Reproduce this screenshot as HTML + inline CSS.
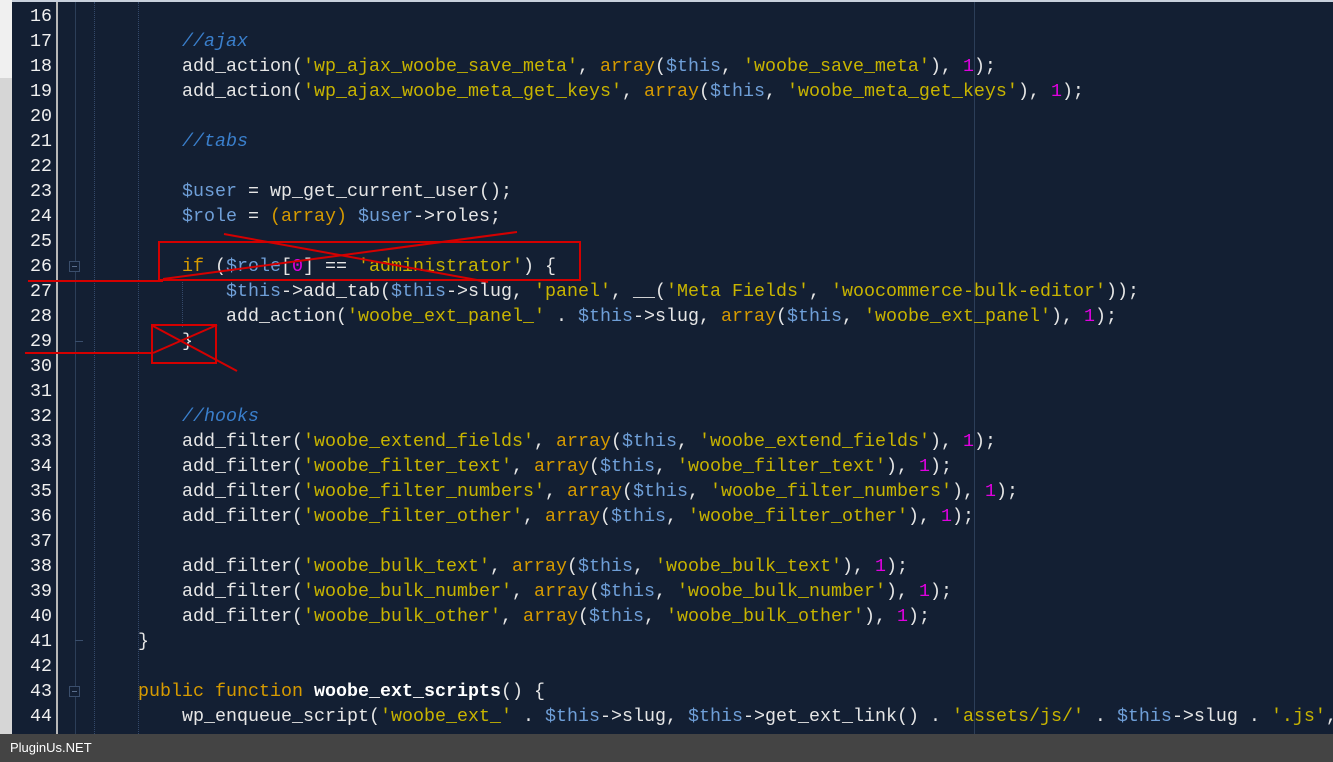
<!DOCTYPE html>
<html><head><meta charset="utf-8"><style>
html,body{margin:0;padding:0;width:1333px;height:762px;overflow:hidden;background:#131f33;}
#ls{position:absolute;left:0;top:0;width:12px;height:734px;background:#d6d6d6;}
#ls2{position:absolute;left:0;top:0;width:12px;height:78px;background:#f0f0f0;}
#top{position:absolute;left:12px;top:0;width:1321px;height:2px;background:#c8d0dc;}
#gb{position:absolute;left:56px;top:2px;width:2px;height:732px;background:#b8b8b8;}
#fl{position:absolute;left:75px;top:2px;width:1px;height:732px;background:#2c3e58;}
.dg{position:absolute;top:2px;height:732px;border-left:1px dotted #34496a;}
#edge{position:absolute;left:974px;top:2px;width:1px;height:732px;background:#2c3e58;}
.ln{position:absolute;left:0;width:52px;text-align:right;color:#f0f0f0;font:18.33px/25px "Liberation Mono",monospace;}
.cl{position:absolute;left:138px;white-space:pre;color:#e6e6e6;font:18.33px/25px "Liberation Mono",monospace;}
.s{color:#c8b400}.k{color:#d69a00}.v{color:#6f9fd8}.c{color:#3a7fcc;font-style:italic}.n{color:#e000e0}.b{font-weight:bold;color:#fff}
.fb{position:absolute;left:69px;width:11px;height:11px;border:1px solid #3a4e6c;box-sizing:border-box;background:#131f33}
.fb:after{content:"";position:absolute;left:2px;top:4px;width:5px;height:1px;background:#5a6e8c}
.tk{position:absolute;left:75px;width:8px;height:1px;background:#3a4e6c}
#bar{position:absolute;left:0;top:734px;width:1333px;height:28px;background:#444;color:#fff;font:13px/28px "Liberation Sans",sans-serif;padding-left:10px;box-sizing:border-box;}
</style></head><body>
<div id="ls"></div><div id="ls2"></div><div id="top"></div>
<div id="gb"></div><div id="fl"></div>
<div class="dg" style="left:94px"></div><div class="dg" style="left:138px"></div>
<div id="edge"></div>
<div class="dg" style="left:182px;top:282px;height:45px"></div>

<div class="ln" style="top:4px">16</div>
<div class="ln" style="top:29px">17</div>
<div class="ln" style="top:54px">18</div>
<div class="ln" style="top:79px">19</div>
<div class="ln" style="top:104px">20</div>
<div class="ln" style="top:129px">21</div>
<div class="ln" style="top:154px">22</div>
<div class="ln" style="top:179px">23</div>
<div class="ln" style="top:204px">24</div>
<div class="ln" style="top:229px">25</div>
<div class="ln" style="top:254px">26</div>
<div class="ln" style="top:279px">27</div>
<div class="ln" style="top:304px">28</div>
<div class="ln" style="top:329px">29</div>
<div class="ln" style="top:354px">30</div>
<div class="ln" style="top:379px">31</div>
<div class="ln" style="top:404px">32</div>
<div class="ln" style="top:429px">33</div>
<div class="ln" style="top:454px">34</div>
<div class="ln" style="top:479px">35</div>
<div class="ln" style="top:504px">36</div>
<div class="ln" style="top:529px">37</div>
<div class="ln" style="top:554px">38</div>
<div class="ln" style="top:579px">39</div>
<div class="ln" style="top:604px">40</div>
<div class="ln" style="top:629px">41</div>
<div class="ln" style="top:654px">42</div>
<div class="ln" style="top:679px">43</div>
<div class="ln" style="top:704px">44</div>

<div class="fb" style="top:261px"></div>
<div class="fb" style="top:686px"></div>
<div class="tk" style="top:341px"></div>
<div class="tk" style="top:640px"></div>

<div class="cl" style="top:29px">    <span class="c">//ajax</span></div>
<div class="cl" style="top:54px">    add_action(<span class="s">'wp_ajax_woobe_save_meta'</span>, <span class="k">array</span>(<span class="v">$this</span>, <span class="s">'woobe_save_meta'</span>), <span class="n">1</span>);</div>
<div class="cl" style="top:79px">    add_action(<span class="s">'wp_ajax_woobe_meta_get_keys'</span>, <span class="k">array</span>(<span class="v">$this</span>, <span class="s">'woobe_meta_get_keys'</span>), <span class="n">1</span>);</div>
<div class="cl" style="top:129px">    <span class="c">//tabs</span></div>
<div class="cl" style="top:179px">    <span class="v">$user</span> = wp_get_current_user();</div>
<div class="cl" style="top:204px">    <span class="v">$role</span> = <span class="k">(array)</span> <span class="v">$user</span>-&gt;roles;</div>
<div class="cl" style="top:254px">    <span class="k">if</span> (<span class="v">$role</span>[<span class="n">0</span>] == <span class="s">'administrator'</span>) {</div>
<div class="cl" style="top:279px">        <span class="v">$this</span>-&gt;add_tab(<span class="v">$this</span>-&gt;slug, <span class="s">'panel'</span>, __(<span class="s">'Meta Fields'</span>, <span class="s">'woocommerce-bulk-editor'</span>));</div>
<div class="cl" style="top:304px">        add_action(<span class="s">'woobe_ext_panel_'</span> . <span class="v">$this</span>-&gt;slug, <span class="k">array</span>(<span class="v">$this</span>, <span class="s">'woobe_ext_panel'</span>), <span class="n">1</span>);</div>
<div class="cl" style="top:329px">    }</div>
<div class="cl" style="top:404px">    <span class="c">//hooks</span></div>
<div class="cl" style="top:429px">    add_filter(<span class="s">'woobe_extend_fields'</span>, <span class="k">array</span>(<span class="v">$this</span>, <span class="s">'woobe_extend_fields'</span>), <span class="n">1</span>);</div>
<div class="cl" style="top:454px">    add_filter(<span class="s">'woobe_filter_text'</span>, <span class="k">array</span>(<span class="v">$this</span>, <span class="s">'woobe_filter_text'</span>), <span class="n">1</span>);</div>
<div class="cl" style="top:479px">    add_filter(<span class="s">'woobe_filter_numbers'</span>, <span class="k">array</span>(<span class="v">$this</span>, <span class="s">'woobe_filter_numbers'</span>), <span class="n">1</span>);</div>
<div class="cl" style="top:504px">    add_filter(<span class="s">'woobe_filter_other'</span>, <span class="k">array</span>(<span class="v">$this</span>, <span class="s">'woobe_filter_other'</span>), <span class="n">1</span>);</div>
<div class="cl" style="top:554px">    add_filter(<span class="s">'woobe_bulk_text'</span>, <span class="k">array</span>(<span class="v">$this</span>, <span class="s">'woobe_bulk_text'</span>), <span class="n">1</span>);</div>
<div class="cl" style="top:579px">    add_filter(<span class="s">'woobe_bulk_number'</span>, <span class="k">array</span>(<span class="v">$this</span>, <span class="s">'woobe_bulk_number'</span>), <span class="n">1</span>);</div>
<div class="cl" style="top:604px">    add_filter(<span class="s">'woobe_bulk_other'</span>, <span class="k">array</span>(<span class="v">$this</span>, <span class="s">'woobe_bulk_other'</span>), <span class="n">1</span>);</div>
<div class="cl" style="top:629px">}</div>
<div class="cl" style="top:679px"><span class="k">public</span> <span class="k">function</span> <span class="b">woobe_ext_scripts</span>() {</div>
<div class="cl" style="top:704px">    wp_enqueue_script(<span class="s">'woobe_ext_'</span> . <span class="v">$this</span>-&gt;slug, <span class="v">$this</span>-&gt;get_ext_link() . <span class="s">'assets/js/'</span> . <span class="v">$this</span>-&gt;slug . <span class="s">'.js'</span>,</div>

<svg style="position:absolute;left:0;top:0" width="1333" height="762">
<g stroke="#d40000" stroke-width="2" fill="none">
<rect x="159" y="242" width="421" height="38"/>
<line x1="224" y1="234" x2="488" y2="282"/>
<line x1="163" y1="279" x2="517" y2="232"/>
<line x1="28" y1="281" x2="163" y2="281"/>
<rect x="152" y="325" width="64" height="38"/>
<line x1="153" y1="353" x2="217" y2="325"/>
<line x1="153" y1="326" x2="237" y2="371"/>
<line x1="25" y1="353" x2="153" y2="353"/>
</g></svg>

<div id="bar">PluginUs.NET</div>
</body></html>
